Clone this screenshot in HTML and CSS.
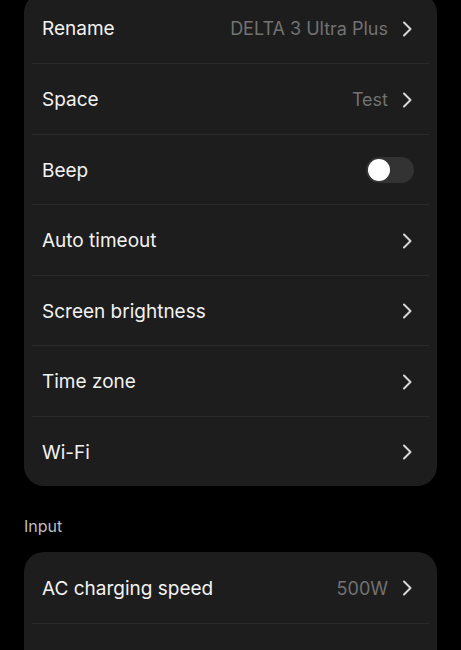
FILE: index.html
```html
<!doctype html>
<html>
	<head>
		<title>Device settings</title>
		<link rel="stylesheet" href="styles.css">
	</head>
	<body>
		<div class="page">
			<div class="card first">
				<div class="row">
					<span class="label">Rename</span>
					<span class="value">DELTA 3 Ultra Plus</span>
					<svg class="chev" width="10" height="16" viewBox="0 0 10 16"><path d="M2 1.5 L8.5 8 L2 14.5"/></svg>
				</div>
				<div class="row">
					<span class="label">Space</span>
					<span class="value">Test</span>
					<svg class="chev" width="10" height="16" viewBox="0 0 10 16"><path d="M2 1.5 L8.5 8 L2 14.5"/></svg>
				</div>
				<div class="row">
					<span class="label">Beep</span>
					<span class="toggle"><span class="knob"></span></span>
				</div>
				<div class="row">
					<span class="label">Auto timeout</span>
					<svg class="chev" width="10" height="16" viewBox="0 0 10 16"><path d="M2 1.5 L8.5 8 L2 14.5"/></svg>
				</div>
				<div class="row">
					<span class="label">Screen brightness</span>
					<svg class="chev" width="10" height="16" viewBox="0 0 10 16"><path d="M2 1.5 L8.5 8 L2 14.5"/></svg>
				</div>
				<div class="row">
					<span class="label">Time zone</span>
					<svg class="chev" width="10" height="16" viewBox="0 0 10 16"><path d="M2 1.5 L8.5 8 L2 14.5"/></svg>
				</div>
				<div class="row">
					<span class="label">Wi-Fi</span>
					<svg class="chev" width="10" height="16" viewBox="0 0 10 16"><path d="M2 1.5 L8.5 8 L2 14.5"/></svg>
				</div>
			</div>

			<div class="section">Input</div>

			<div class="card">
				<div class="row">
					<span class="label">AC charging speed</span>
					<span class="value">500W</span>
					<svg class="chev" width="10" height="16" viewBox="0 0 10 16"><path d="M2 1.5 L8.5 8 L2 14.5"/></svg>
				</div>
				<div class="row">
					<span class="label"></span>
					<svg class="chev" width="10" height="16" viewBox="0 0 10 16"><path d="M2 1.5 L8.5 8 L2 14.5"/></svg>
				</div>
			</div>
		</div>
	</body>
</html>
```

FILE: styles.css
```css
body {
	margin: 0;
	background-color: #000;
	font-family: Inter, "Noto Sans", sans-serif;
	color: #f2f2f2;
	overflow: hidden;
}
.page {
	padding: 0 24px;
}
.card {
	background-color: #1d1d1d;
	border-radius: 20px;
	overflow: hidden;
}
.card.first {
	margin-top: -7.5px;
}
.row {
	display: flex;
	align-items: center;
	box-sizing: border-box;
	height: 70.5px;
	margin: 0 8px;
	padding: 2px 17px 0 10px;
}
.row + .row {
	border-top: 1px solid #2a2a2a;
}
.label {
	flex: 1;
	font-size: 19px;
}
.value {
	font-size: 18px;
	color: #727272;
	margin-right: 14px;
}
.chev {
	display: block;
}
.chev path {
	fill: none;
	stroke: #d8d8d8;
	stroke-width: 2;
	stroke-linecap: round;
	stroke-linejoin: round;
}
.toggle {
	display: flex;
	align-items: center;
	width: 48px;
	height: 26px;
	margin-right: -2px;
	border-radius: 13px;
	background-color: #333;
	padding: 0 2px;
	box-sizing: border-box;
}
.knob {
	width: 22px;
	height: 22px;
	border-radius: 50%;
	background-color: #fff;
}
.section {
	margin: 30px 0 16px;
	font-size: 16px;
	line-height: 20px;
	color: #bdbdbd;
}
```
